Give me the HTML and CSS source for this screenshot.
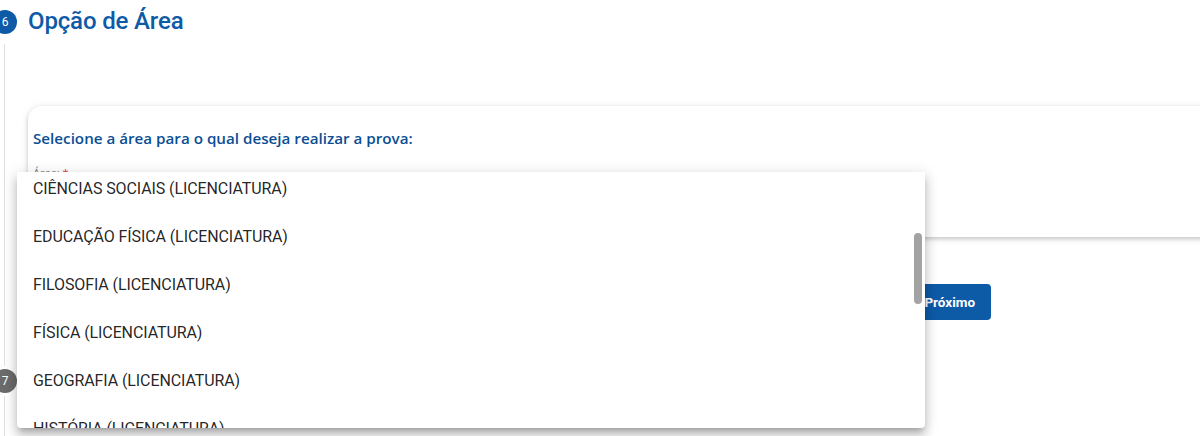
FILE: index.html
```html
<!DOCTYPE html>
<html lang="pt-BR">
<head>
<meta charset="utf-8">
<title>Opção de Área</title>
<link rel="stylesheet" href="styles.css">
</head>
<body>
<div class="stepper">
  <div class="step">
    <div class="step-head">
      <span class="step-num active">6</span>
      <h2 class="step-title">Opção de Área</h2>
    </div>
    <div class="step-body">
      <div class="card">
        <p class="card-title">Selecione a área para o qual deseja realizar a prova:</p>
        <label class="field-label">Área: <span class="req">*</span></label>
        <div class="select-field"></div>
      </div>
      <div class="actions">
        <button class="btn btn-secondary">Anterior</button>
        <button class="btn btn-primary">Próximo</button>
      </div>
    </div>
  </div>
  <div class="step">
    <div class="step-head step-head-next">
      <span class="step-num">7</span>
    </div>
    <div class="step-body step-body-tail"></div>
  </div>
</div>

<div class="menu">
  <ul class="menu-list">
    <li class="menu-item">CIÊNCIAS SOCIAIS (LICENCIATURA)</li>
    <li class="menu-item">EDUCAÇÃO FÍSICA (LICENCIATURA)</li>
    <li class="menu-item">FILOSOFIA (LICENCIATURA)</li>
    <li class="menu-item">FÍSICA (LICENCIATURA)</li>
    <li class="menu-item">GEOGRAFIA (LICENCIATURA)</li>
    <li class="menu-item">HISTÓRIA (LICENCIATURA)</li>
  </ul>
  <div class="scroll-thumb"></div>
</div>
</body>
</html>
```

FILE: styles.css
```css
* { box-sizing: border-box; }

html, body {
  margin: 0;
  padding: 0;
  background: #ffffff;
  overflow: hidden;
  width: 1200px;
  height: 436px;
}

body {
  font-family: Roboto, "Noto Sans", sans-serif;
  position: relative;
}

.stepper {
  display: flex;
  flex-direction: column;
}

.step-head {
  display: flex;
  align-items: center;
  height: 44px;
}

.step-num {
  flex: 0 0 24px;
  width: 24px;
  height: 24px;
  margin-left: -7px;
  border-radius: 50%;
  background: #6b6b6b;
  color: #fff;
  font-size: 12px;
  display: flex;
  align-items: center;
  justify-content: center;
}

.step-num.active {
  background: #0d5aa7;
}

.step-title {
  margin: 0 0 0 11px;
  font-size: 24px;
  font-weight: 500;
  letter-spacing: -0.15px;
  color: #0d5aa7;
  line-height: 28px;
  position: relative;
  top: -1px;
}

.step-body {
  margin-left: 4px;
  border-left: 1px solid #e0e0e0;
  padding: 62px 0 46px 23px;
}

.card {
  width: 1260px;
  height: 131px;
  background: #fff;
  border-radius: 14px 4px 4px 4px;
  box-shadow: 0 2px 4px rgba(0, 0, 0, 0.18), 0 1px 10px rgba(0, 0, 0, 0.08);
  padding: 19px 5px 0 5px;
}

.card-title {
  margin: 0;
  font-family: "Open Sans", sans-serif;
  font-weight: 600;
  font-size: 15.2px;
  line-height: 26px;
  color: #0b4e94;
}

.field-label {
  display: block;
  margin-top: 14px;
  font-family: "Open Sans", sans-serif;
  font-size: 11px;
  color: #777;
}

.req { color: #d32f2f; }

.actions {
  display: flex;
  gap: 12px;
  margin-top: 47px;
  padding-left: 787px;
}

.btn {
  height: 36px;
  border: none;
  border-radius: 4px;
  font-family: Roboto, sans-serif;
  font-weight: 700;
  font-size: 13.5px;
  padding: 0 16px;
}

.btn-secondary {
  background: #e6e6e6;
  color: #444;
}

.btn-primary {
  background: #0d5aa7;
  color: #fff;
}

.step-head-next {
  height: 30px;
}

.step-body-tail {
  height: 60px;
  padding: 0;
}

.menu {
  position: absolute;
  left: 17px;
  top: 172px;
  width: 908px;
  height: 256px;
  background: #fff;
  border-radius: 0 0 4px 4px;
  box-shadow: 0 5px 5px -3px rgba(0,0,0,.2), 0 8px 10px 1px rgba(0,0,0,.14), 0 3px 14px 2px rgba(0,0,0,.12);
  overflow: hidden;
}

.menu-list {
  list-style: none;
  margin: -8px 0 0 0;
  padding: 0;
}

.menu-item {
  height: 48px;
  display: flex;
  align-items: center;
  padding: 0 16px;
  font-size: 16px;
  letter-spacing: -0.1px;
  color: rgba(0, 0, 0, 0.87);
}

.scroll-thumb {
  position: absolute;
  right: 3px;
  top: 61px;
  width: 8px;
  height: 71px;
  border-radius: 4px;
  background: #a3a3a3;
}
```
